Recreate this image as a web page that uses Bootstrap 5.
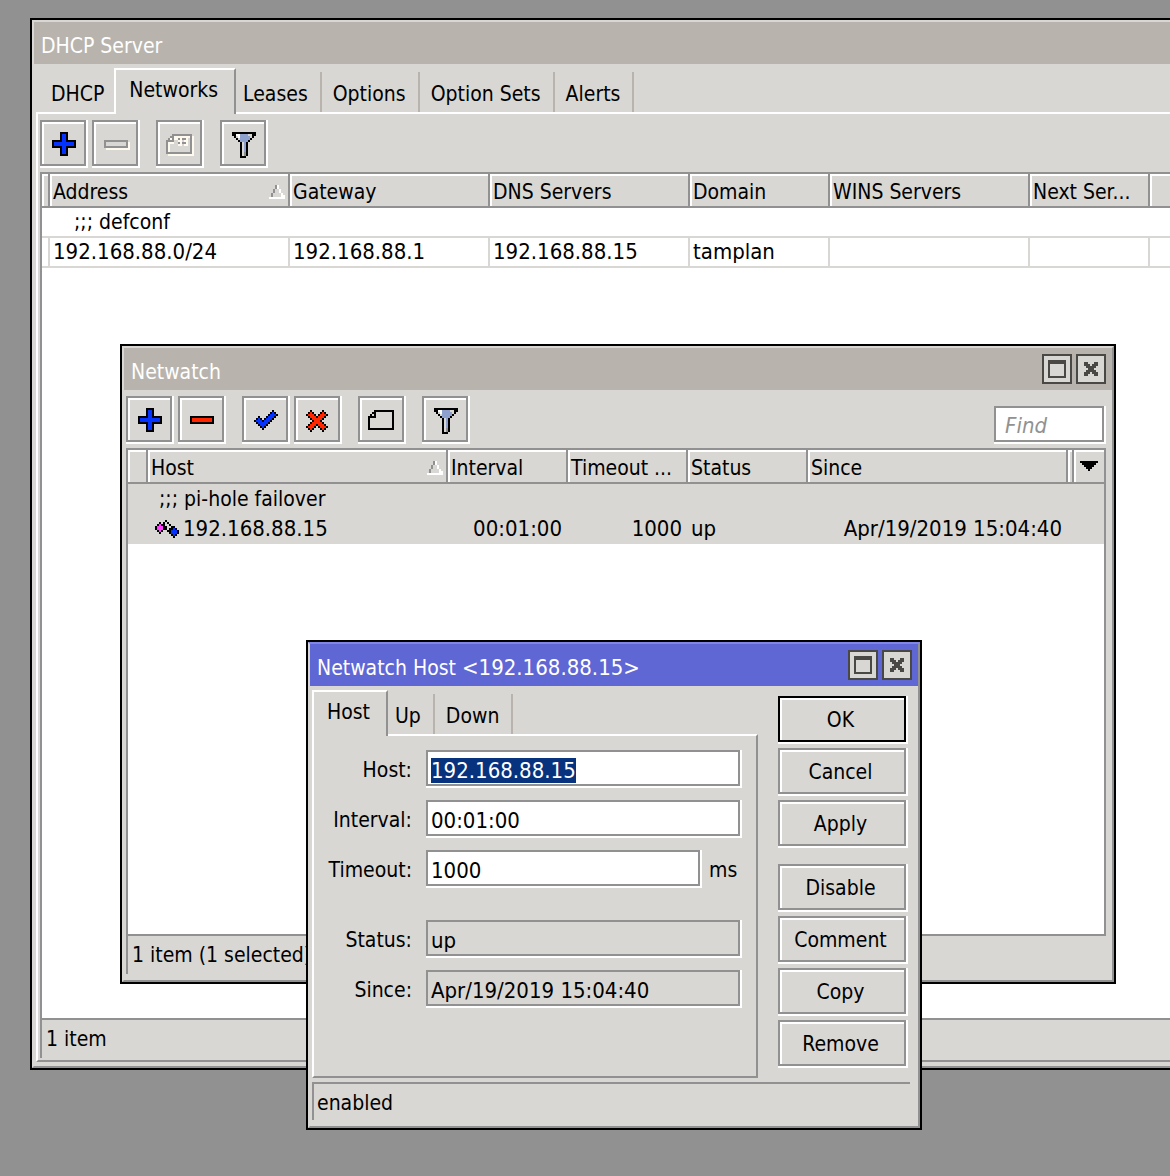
<!DOCTYPE html>
<html lang="en">
<head>
<meta charset="utf-8">
<meta name="viewport" content="width=device-width, initial-scale=1">
<title>DHCP Server</title>
<link href="https://cdn.jsdelivr.net/npm/bootstrap@5.3.0/dist/css/bootstrap.min.css" rel="stylesheet">
<style>
:root { --face:#d8d7d3; --line:#919191; --caption:#b8b4ad; --dark:#4a4845; }
body { background:#919191; color:#000; font-family:"DejaVu Sans Condensed","DejaVu Sans",sans-serif; font-size:21px; line-height:28px; }
.desktop { min-height:100vh; }
.num { font-size:22px; }

/* windows */
.win { border:2px solid #000; background:var(--face); }
.win-frame { border:2px solid var(--face); border-right-color:var(--line); border-bottom-color:var(--line); }
.win-dhcp { left:30px; right:-20px; top:18px; min-height:1052px; }
.win-watch { left:120px; top:344px; width:996px; min-height:640px; }
.win-host { left:306px; top:640px; width:616px; min-height:490px; }
.caption-bar { background:var(--caption); color:#fff; height:42px; padding:6px 6px 0 7px; }
.caption-bar h1 { font-size:inherit; line-height:28px; font-weight:400; padding-top:4px; }
.win-host .caption-bar { background:#5f67d5; }
.win-host > .win-frame { border-top-color:#7f86e6; }
.cap-btn { width:30px; height:30px; border:2px solid var(--dark); background:var(--face); padding:0; display:flex; align-items:center; justify-content:center; color:var(--dark); }
svg { display:block; shape-rendering:crispEdges; }

/* tabs */
.tab-strip { padding:4px 0 0 2px; }
.tab-strip a { color:#000; text-decoration:none; display:block; height:40px; padding:8px 12px 0 11px; border-right:2px solid var(--caption); }
.tab-strip a.first { border-right:0; padding:8px 10px 0 15px; }
.tab-strip a.active { height:46px; margin-bottom:-2px; border:2px solid #fff; border-right-color:var(--line); border-bottom:0; background:var(--face); padding:6px 16px 0 13px; position:relative; }
.tab-strip a.after { padding-left:7px; }
.sheet { border:2px solid #fff; border-right-color:var(--line); border-bottom-color:var(--line); margin-left:2px; }

/* toolbar */
.tools { padding:6px 0; gap:6px; }
.tool { width:46px; height:46px; padding:2px 0 0 2px; border:2px solid var(--line); background:var(--face); box-shadow:inset 2px 2px #fff, 2px 0 #fff, 0 2px #fff, 2px 2px #fff; }
.tool-gap { margin-left:12px; }
.field { height:36px; border:2px solid var(--line); border-radius:0; background:#fff; padding:4px 3px 0; box-shadow:2px 0 #fff, 0 2px #fff, 2px 2px #fff; color:#000; outline:0; min-width:0; }
.field[readonly] { background:var(--face); }
.field::selection { background:#06327e; color:#fff; }
.find { width:110px; padding:2px 9px 0; margin-right:2px; font-size:22px; }
.find::placeholder { color:var(--line); font-style:italic; opacity:1; }

/* lists */
.list { border-left:2px solid var(--line); border-top:2px solid var(--line); background:#fff; }
.boxed { border-right:2px solid var(--line); }
.list table { table-layout:fixed; width:100%; border-collapse:separate; border-spacing:0; }
.list th { font-weight:400; height:34px; background:var(--face); border-right:2px solid var(--line); border-bottom:2px solid var(--line); box-shadow:inset 2px 2px #fff; padding:4px 3px 0; white-space:nowrap; }
.list th:last-child, .lined td:last-child { border-right:0; }
.list td { height:30px; padding:0 6px 0 3px; white-space:nowrap; }
.lined td { border-right:2px solid var(--face); border-bottom:2px solid var(--face); }
.lined td.bare { border-right:0; }
.picked td { background:var(--face); }
.status { border-left:2px solid var(--line); height:38px; padding:5px 4px 0; }
.status-line { border-top:2px solid var(--line); }
.dhcp-sheet { padding:0 0 2px 2px; }
.watch-body { padding:0 6px 6px 2px; }

/* host dialog */
.push { width:128px; height:46px; border:2px solid var(--line); background:var(--face); padding:2px 3px 0 0; color:#000; box-shadow:inset 2px 2px #fff, 2px 0 #fff, 0 2px #fff, 2px 2px #fff; }
.push.ok { border-color:#000; }
.side { padding:10px 12px 0 20px; gap:6px; }
.part-sm { margin-top:12px; }
.form-grid { padding:14px 16px 0 0; gap:14px; }
.form-grid label { width:98px; text-align:right; margin-right:14px; padding-top:6px; }
.part { margin-top:20px; }
.unit { width:40px; padding:6px 0 0 9px; }
.host-status { margin:4px 8px 6px 2px; }
.host-status .status { height:36px; padding-left:3px; }
</style>
</head>
<body>
<svg width="0" height="0" class="position-absolute" aria-hidden="true">
  <defs>
    <symbol id="plus" viewBox="0 0 20 20"><path d="M8 4h4v4h4v4h-4v4h-4v-4h-4v-4h4z"/><path fill="#0433ff" d="M9 5h2v4h4v2h-4v4h-2v-4h-4v-2h4z"/></symbol>
    <symbol id="minus" viewBox="0 0 20 20"><path d="M4 8h12v4h-12z"/><path fill="#ff2600" d="M5 9h10v2h-10z"/></symbol>
    <symbol id="minus-off" viewBox="0 0 20 20"><path fill="#fffaf0" d="M5 9h12v4h-12z"/><path fill="#919191" d="M4 8h12v4h-12z"/><path fill="#d8d7d3" d="M5 9h10v2h-10z"/></symbol>
    <symbol id="tick" viewBox="0 0 20 20"><g transform="translate(4 5.5)"><path stroke="#000" d="M9 0h1M8 1h3M7 2h5M2 3h1M6 3h5M1 4h3M5 4h5M0 5h9M1 6h7M2 7h5M3 8h3M4 9h1"/><path stroke="#0433ff" d="M9 1h1M8 2h3M7 3h3M2 4h1M6 4h3M1 5h3M5 5h3M2 6h5M3 7h3M4 8h1"/></g></symbol>
    <symbol id="cross" viewBox="0 0 20 20"><g transform="translate(4 5.5)"><path stroke="#000" d="M2 0h1M8 0h1M1 1h3M7 1h3M0 2h5M6 2h5M1 3h9M2 4h7M3 5h5M2 6h7M1 7h9M0 8h5M6 8h5M1 9h3M7 9h3M2 10h1M8 10h1"/><path stroke="#ff2600" d="M2 1h1M8 1h1M1 2h3M7 2h3M2 3h3M6 3h3M3 4h5M4 5h3M3 6h5M2 7h3M6 7h3M1 8h3M7 8h3M2 9h1M8 9h1"/></g></symbol>
    <symbol id="note" viewBox="0 0 20 20"><g transform="translate(3 5.5)"><path stroke="#000" d="M3 0h10M2 1h2M12 1h1M1 2h1M3 2h1M12 2h1M0 3h4M12 3h1M0 4h1M12 4h1M0 5h1M12 5h1M0 6h1M12 6h1M0 7h1M12 7h1M0 8h1M12 8h1M0 9h13"/></g></symbol>
    <symbol id="note-off" viewBox="0 0 20 20"><g transform="translate(3 5.5)"><path stroke="#fffaf0" d="M13 1h1M13 2h1M13 3h1M13 4h1M13 5h1M13 6h1M13 7h1M13 8h1M13 9h1M1 10h13M4 1h8M2 2h1M4 2h2M7 2h1M10 2h1M1 4h3M6 3h2M9 3h2M7 4h1M10 4h1M6 5h2M9 5h2M1 5h1M1 6h1M1 7h1M1 8h1"/><path stroke="#919191" d="M3 0h10M2 1h2M12 1h1M1 2h1M3 2h1M12 2h1M0 3h4M12 3h1M0 4h1M12 4h1M0 5h1M12 5h1M0 6h1M12 6h1M0 7h1M12 7h1M0 8h1M12 8h1M0 9h13M6 2h1M8 2h2M6 4h1M8 4h2"/></g></symbol>
    <symbol id="funnel" viewBox="0 0 20 20"><g transform="translate(4 4.5)"><path stroke="#000" d="M0 0h12M0 1h12M1 2h10M2 3h8M3 4h6M4 5h4M4 6h4M4 7h4M4 8h4M4 9h4M4 10h4M4 11h4M4 12h3"/><path stroke="#fff" d="M2 1h2M3 2h1"/><path stroke="#d8d7d3" d="M8 1h2M2 2h1M9 2h1M3 3h1M5 5h1M5 6h1M5 7h1M5 8h1M5 9h1M5 10h1M5 11h1"/><path stroke="#8ea0cc" d="M4 1h4M4 2h5M4 3h5M4 4h4M6 5h1M6 6h1M6 7h1M6 8h1M6 9h1"/><path stroke="#919191" d="M6 10h1M6 11h1"/></g></symbol>
    <symbol id="sort" viewBox="0 0 8 7"><g transform="translate(0 .5)"><path stroke="#fff" d="M4 0h1M4 1h1M5 2h1M5 3h1M6 4h1M6 5h2M0 6h8"/><path stroke="#919191" d="M3 0h1M3 1h1M2 2h1M2 3h1M1 4h1M1 5h1"/></g></symbol>
    <symbol id="maxi" viewBox="0 0 9 9"><path fill="currentColor" fill-rule="evenodd" d="M0 0h9v9h-9zM1 2v6h7v-6z"/></symbol>
    <symbol id="shut" viewBox="0 0 7 7"><path transform="translate(0 .5)" stroke="currentColor" d="M0 0h2M5 0h2M0 1h3M4 1h3M1 2h5M2 3h3M1 4h5M0 5h3M4 5h3M0 6h2M5 6h2"/></symbol>
    <symbol id="drop" viewBox="0 0 9 5"><path transform="translate(0 .5)" stroke="#000" d="M0 0h9M1 1h7M2 2h5M3 3h3M4 4h1"/></symbol>
    <symbol id="probe" viewBox="0 0 12 9"><g transform="translate(0 .5)"><path stroke="#000" d="M2 1h1M1 2h3M0 3h5M0 4h5M1 5h3M2 6h1M5 0h1M4 1h1M6 1h1M4 2h1M7 2h1M5 3h1M8 3h1M5 4h1M7 4h1M6 5h1M9 3h1M8 4h3M7 5h5M7 6h5M8 7h3M9 8h1"/><path stroke="#ff40ff" d="M2 2h1M1 3h3M1 4h3M2 5h1"/><path stroke="#0433ff" d="M9 4h1M8 5h3M8 6h3M9 7h1"/></g></symbol>
  </defs>
</svg>
<main class="desktop position-relative overflow-hidden">

  <section class="win win-dhcp position-absolute d-flex" aria-labelledby="t1">
    <div class="win-frame flex-grow-1 d-flex flex-column">
      <header class="caption-bar d-flex"><h1 id="t1" class="m-0">DHCP Server</h1></header>
      <nav class="tab-strip d-flex align-items-end">
        <a href="#" class="first">DHCP</a><a href="#" class="active" aria-current="page">Networks</a><a href="#" class="after">Leases</a><a href="#">Options</a><a href="#">Option Sets</a><a href="#">Alerts</a>
      </nav>
      <div class="sheet dhcp-sheet flex-grow-1 d-flex flex-column mb-1">
        <div class="tools d-flex">
          <button type="button" class="tool" aria-label="Add"><svg width="40" height="40"><use href="#plus"/></svg></button>
          <button type="button" class="tool" aria-label="Remove"><svg width="40" height="40"><use href="#minus-off"/></svg></button>
          <button type="button" class="tool tool-gap" aria-label="Comment"><svg width="40" height="40"><use href="#note-off"/></svg></button>
          <button type="button" class="tool tool-gap" aria-label="Filter"><svg width="40" height="40"><use href="#funnel"/></svg></button>
        </div>
        <div class="list lined flex-grow-1">
          <table>
            <colgroup><col style="width:8px"><col style="width:240px"><col style="width:200px"><col style="width:200px"><col style="width:140px"><col style="width:200px"><col style="width:120px"><col></colgroup>
            <thead><tr><th></th><th><span class="d-flex justify-content-between align-items-center">Address<svg width="16" height="14"><use href="#sort"/></svg></span></th><th>Gateway</th><th>DNS Servers</th><th>Domain</th><th>WINS Servers</th><th>Next Ser...</th><th></th></tr></thead>
            <tbody>
              <tr><td class="bare"></td><td colspan="7" class="ps-4">;;; defconf</td></tr>
              <tr class="num"><td></td><td>192.168.88.0/24</td><td>192.168.88.1</td><td>192.168.88.15</td><td>tamplan</td><td></td><td></td><td></td></tr>
            </tbody>
          </table>
        </div>
        <div class="status-line"><div class="status">1 item</div></div>
      </div>
    </div>
  </section>

  <section class="win win-watch position-absolute d-flex" aria-labelledby="t2">
    <div class="win-frame flex-grow-1 d-flex flex-column">
      <header class="caption-bar d-flex align-items-start">
        <h1 id="t2" class="m-0 me-auto">Netwatch</h1>
        <div class="d-flex gap-1"><button type="button" class="cap-btn" aria-label="Maximize"><svg width="18" height="18"><use href="#maxi"/></svg></button><button type="button" class="cap-btn" aria-label="Close"><svg width="14" height="14"><use href="#shut"/></svg></button></div>
      </header>
      <div class="flex-grow-1 d-flex flex-column watch-body">
        <div class="tools d-flex">
          <button type="button" class="tool" aria-label="Add"><svg width="40" height="40"><use href="#plus"/></svg></button>
          <button type="button" class="tool" aria-label="Remove"><svg width="40" height="40"><use href="#minus"/></svg></button>
          <button type="button" class="tool tool-gap" aria-label="Enable"><svg width="40" height="40"><use href="#tick"/></svg></button>
          <button type="button" class="tool" aria-label="Disable"><svg width="40" height="40"><use href="#cross"/></svg></button>
          <button type="button" class="tool tool-gap" aria-label="Comment"><svg width="40" height="40"><use href="#note"/></svg></button>
          <button type="button" class="tool tool-gap" aria-label="Filter"><svg width="40" height="40"><use href="#funnel"/></svg></button>
          <input type="text" class="field find ms-auto align-self-end" placeholder="Find" aria-label="Find">
        </div>
        <div class="list picked boxed flex-grow-1">
          <table>
            <colgroup><col style="width:20px"><col style="width:300px"><col style="width:120px"><col style="width:120px"><col style="width:120px"><col style="width:260px"><col style="width:6px"><col></colgroup>
            <thead><tr><th></th><th><span class="d-flex justify-content-between align-items-center">Host<svg width="16" height="14"><use href="#sort"/></svg></span></th><th>Interval</th><th>Timeout ...</th><th>Status</th><th>Since</th><th class="p-0"></th><th class="pt-0"><svg width="18" height="10" class="mx-auto"><use href="#drop"/></svg></th></tr></thead>
            <tbody>
              <tr><td></td><td colspan="7"><span class="ms-2">;;; pi-hole failover</span></td></tr>
              <tr class="num"><td></td><td><span class="d-flex align-items-center ps-1 gap-1"><svg width="24" height="18"><use href="#probe"/></svg>192.168.88.15</span></td><td class="text-end">00:01:00</td><td class="text-end">1000</td><td>up</td><td class="text-end">Apr/19/2019 15:04:40</td><td class="p-0"></td><td></td></tr>
            </tbody>
          </table>
        </div>
        <div class="status-line"><div class="status">1 item (1 selected)</div></div>
      </div>
    </div>
  </section>

  <section class="win win-host position-absolute d-flex" aria-labelledby="t3">
    <div class="win-frame flex-grow-1 d-flex flex-column">
      <header class="caption-bar d-flex align-items-start">
        <h1 id="t3" class="m-0 me-auto">Netwatch Host <span class="num">&lt;192.168.88.15&gt;</span></h1>
        <div class="d-flex gap-1"><button type="button" class="cap-btn" aria-label="Maximize"><svg width="18" height="18"><use href="#maxi"/></svg></button><button type="button" class="cap-btn" aria-label="Close"><svg width="14" height="14"><use href="#shut"/></svg></button></div>
      </header>
      <div class="d-flex flex-grow-1">
        <div class="flex-grow-1 d-flex flex-column">
          <nav class="tab-strip d-flex align-items-end"><a href="#" class="active" aria-current="page">Host</a><a href="#" class="after">Up</a><a href="#">Down</a></nav>
          <form class="sheet flex-grow-1 d-flex flex-column form-grid">
            <div class="d-flex"><label for="f1">Host:</label><input type="text" id="f1" class="field num flex-grow-1" value="192.168.88.15"></div>
            <div class="d-flex"><label for="f2">Interval:</label><input type="text" id="f2" class="field num flex-grow-1" value="00:01:00"></div>
            <div class="d-flex"><label for="f3">Timeout:</label><input type="text" id="f3" class="field num flex-grow-1" value="1000"><span class="unit">ms</span></div>
            <div class="d-flex part"><label for="f4">Status:</label><input type="text" id="f4" class="field num flex-grow-1" value="up" readonly></div>
            <div class="d-flex"><label for="f5">Since:</label><input type="text" id="f5" class="field num flex-grow-1" value="Apr/19/2019 15:04:40" readonly></div>
          </form>
        </div>
        <div class="side d-flex flex-column">
          <button type="button" class="push ok">OK</button>
          <button type="button" class="push">Cancel</button>
          <button type="button" class="push">Apply</button>
          <button type="button" class="push part-sm">Disable</button>
          <button type="button" class="push">Comment</button>
          <button type="button" class="push">Copy</button>
          <button type="button" class="push">Remove</button>
        </div>
      </div>
      <div class="status-line host-status"><div class="status">enabled</div></div>
    </div>
  </section>
</main>
<script src="https://cdn.jsdelivr.net/npm/bootstrap@5.3.0/dist/js/bootstrap.bundle.min.js"></script>
<script>
const host = document.getElementById('f1');
host.focus();
host.select();
</script>
</body>
</html>
